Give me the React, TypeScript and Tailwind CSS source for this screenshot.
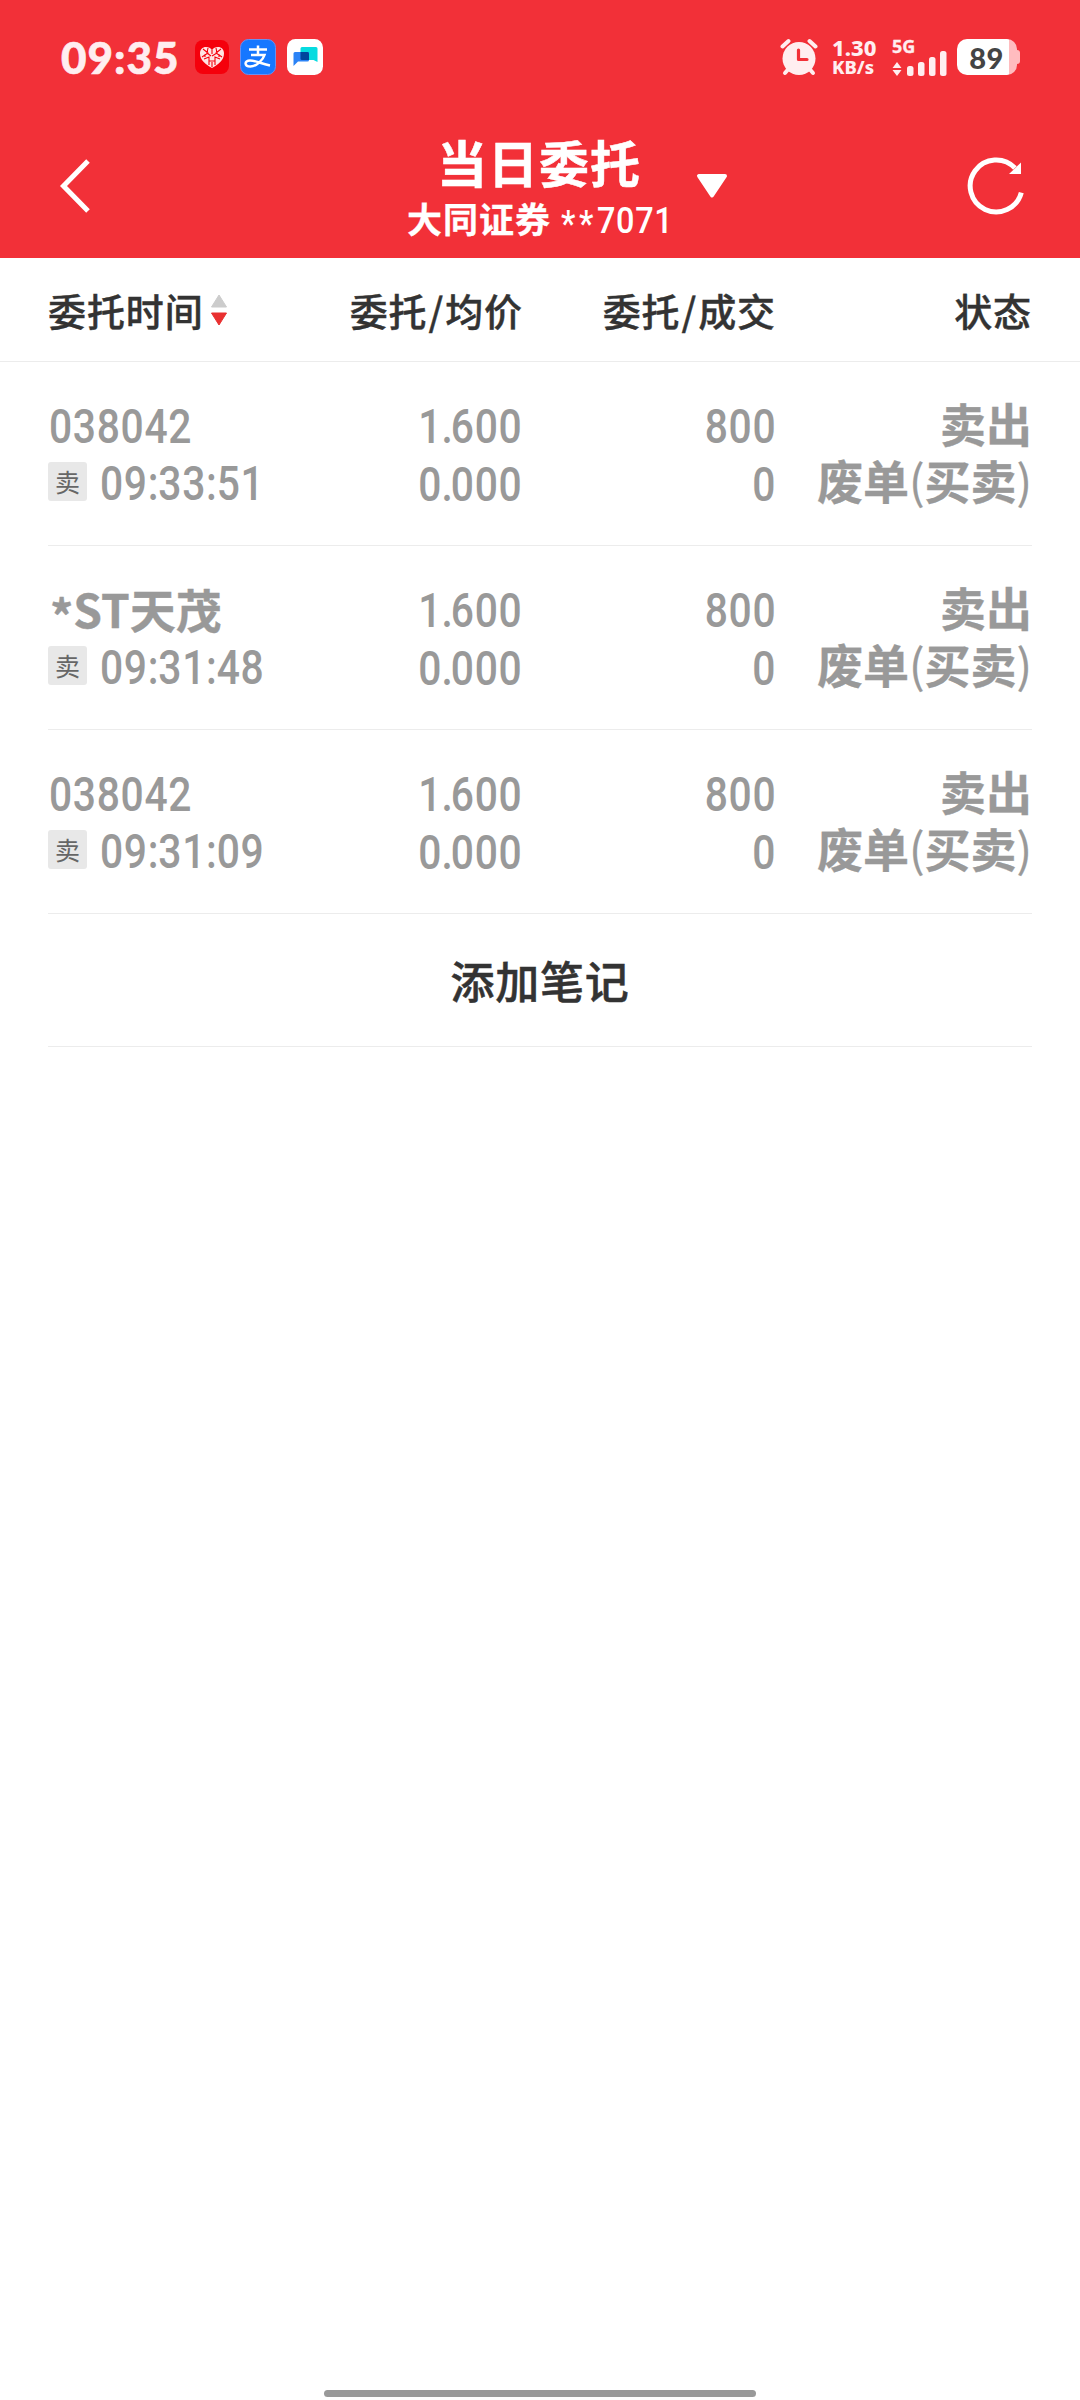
import clsx from "clsx";

type Order = {
  name: string;
  time: string;
  price: string;
  avg: string;
  amount: string;
  filled: string;
};

const orders: Order[] = [
  { name: "038042", time: "09:33:51", price: "1.600", avg: "0.000", amount: "800", filled: "0" },
  { name: "*ST天茂", time: "09:31:48", price: "1.600", avg: "0.000", amount: "800", filled: "0" },
  { name: "038042", time: "09:31:09", price: "1.600", avg: "0.000", amount: "800", filled: "0" },
];

const COLS = "grid grid-cols-[230px_245px_253px_256px]";

/** Condensed digits, with tighter dots and colons. */
function Num({ children, right = false }: { children: string; right?: boolean }) {
  return (
    <span
      className={clsx(
        "inline-block scale-x-[0.85] whitespace-nowrap font-['Roboto'] text-[48px] font-medium tracking-[0.8px]",
        right ? "origin-right" : "origin-left",
      )}
    >
      {children.split(/([.:])/).map((part, i) =>
        part === "." || part === ":" ? (
          <span key={i} className={part === "." ? "-ml-[1px] -mr-[3px]" : "-mr-[1px]"}>
            {part}
          </span>
        ) : (
          part
        ),
      )}
    </span>
  );
}

function StatusBar() {
  return (
    <div className="flex h-[114px] items-center pl-[61px] pr-[60px] text-[#ffeef0]">
      <span className="w-[134px] whitespace-nowrap font-['Lato'] text-[44px] font-black leading-none tracking-[1px] [-webkit-text-stroke:0.6px]">
        09:35
      </span>

      <svg width="34" height="34" viewBox="0 0 34 34">
        <rect width="34" height="34" rx="8" fill="#f5000c" />
        <path
          d="M17 28C11 24.500 5 20.500 5 13.500 5 9.500 7.500 7 11 7c2.500 0 4.800 1.200 6 3.200C18.200 8.200 20.500 7 23 7c3.500 0 6 2.500 6 6.500C29 20.500 23 24.500 17 28Z"
          fill="#ffe4e4"
        />
        <path
          d="M8 9l5 4-6 4M13 8l-1 5 4 3M21 8l1 5-5 3M26 9l-5 4 6 4M9 19l5-2 0 8M25 19l-5-2 0 8M14 21h6M17 10v4M17 22v5M10 14v3M24 14v3"
          stroke="#f5000c"
          strokeWidth="1.1"
          fill="none"
        />
      </svg>

      <svg className="ml-[11px]" width="36" height="36" viewBox="0 0 36 36">
        <rect x="0.500" y="0.500" width="35" height="35" rx="8" fill="#1677ff" stroke="#6c8ff0" />
        <path
          d="M9 10.500h18M18 6.500v9.500M11 16h13.500C23 21 16.500 27.500 10.500 27.500c-6.500 0-6.500-6-.5-6 6 0 10 3 20 5"
          stroke="#fff"
          strokeWidth="2.500"
          fill="none"
        />
      </svg>

      <svg className="ml-[11px]" width="36" height="36" viewBox="0 0 36 36">
        <rect width="36" height="36" rx="8.500" fill="#fff" />
        <path d="M15 8h14a1.500 1.500 0 0 1 1.500 1.500V23l-4-2H15a1.500 1.500 0 0 1-1.500-1.500v-10A1.500 1.500 0 0 1 15 8Z" fill="#06dbe0" />
        <path d="M8 13h14v8a1.500 1.500 0 0 1-1.500 1.500H11L6.500 27V14.500A1.500 1.500 0 0 1 8 13Z" fill="#2b83f6" />
        <path d="M13.500 13h7a1.500 1.500 0 0 1 1.500 1.500V21h-7a1.500 1.500 0 0 1-1.500-1.500Z" fill="#00459c" />
      </svg>

      <svg className="ml-auto" width="38" height="38" viewBox="0 0 38 38" stroke="#ffeef0" fill="none">
        <circle cx="19" cy="20.500" r="16.500" fill="#ffeef0" stroke="none" />
        <path d="M2.500 8.500 8.500 3M35.500 8.500 29.500 3" strokeWidth="4" strokeLinecap="round" />
        <path d="M8 31.500 5 35M30 31.500 33 35" strokeWidth="4" strokeLinecap="round" />
        <path d="M18.500 12v9.500H27" stroke="#f23038" strokeWidth="3.200" strokeLinecap="round" strokeLinejoin="round" />
      </svg>

      <div className="ml-[14px] flex w-[46px] flex-col whitespace-nowrap pb-[1px] font-['Noto_Sans'] font-extrabold">
        <span className="text-[22px] leading-[20px]">1.30</span>
        <span className="text-[18.500px] leading-[19px]">KB/s</span>
      </div>

      <div className="ml-[14px] flex flex-col">
        <span className="relative top-[2px] font-['Noto_Sans'] text-[18px] font-bold leading-[12px] [-webkit-text-stroke:0.3px]">
          5G
        </span>
        <svg width="55" height="26" viewBox="0 0 55 26" fill="#ffeef0">
          <path d="M5 12l4.500 6h-9ZM5 26l4.500-6h-9Z" />
          <rect x="15" y="16" width="6.500" height="10" rx="2.500" />
          <rect x="26" y="12" width="6.500" height="14" rx="2.500" />
          <rect x="37" y="7" width="6.500" height="19" rx="2.500" />
          <rect x="48" y="1" width="6.500" height="25" rx="2.500" />
        </svg>
      </div>

      <div className="ml-[10px] flex items-center">
        <div className="flex h-[36px] w-[60px] items-center justify-center overflow-hidden rounded-[10px] bg-linear-to-r from-white from-[52px] to-[#ffbcbf] to-[52px]">
          <span className="pr-[1px] font-['Lato'] text-[29px] font-black leading-none tracking-[0.5px] text-[#444]">89</span>
        </div>
        <div className="h-[14px] w-[3px] rounded-r-[3px] bg-[#ffbcbf]" />
      </div>
    </div>
  );
}

function NavBar() {
  return (
    <div className="flex h-[144px] pl-[58px] pr-[52px] text-white">
      <svg className="self-center" width="34" height="60" viewBox="0 0 34 60">
        <path d="M30 5 5.500 30 30 55" stroke="currentColor" strokeWidth="5" fill="none" />
      </svg>

      <div className="ml-[315px] w-[264px] pt-[17px] text-center font-['Noto_Sans_CJK_SC',sans-serif] font-bold">
        <h1 className="text-[50px] leading-[60px] tracking-[1px] [-webkit-text-stroke:0.5px]">当日委托</h1>
        <p className="mt-[2px] flex items-baseline whitespace-nowrap text-[35px] leading-[50px]">
          <span className="tracking-[1px] [-webkit-text-stroke:0.3px]">大同证券</span>
          <span className="ml-[10px] inline-block w-[108px] origin-left scale-x-[0.9] whitespace-nowrap text-left font-['Roboto'] text-[36px] font-medium tracking-[0.8px]">
            <span className="relative top-[3px] tracking-[4px]">**</span>7071
          </span>
        </p>
      </div>

      <svg className="ml-[24px] self-center" width="34" height="28" viewBox="0 0 34 28">
        <path d="M4 4h26L17 23.500Z" fill="currentColor" stroke="currentColor" strokeWidth="4" strokeLinejoin="round" />
      </svg>

      <svg className="ml-auto self-center" width="64" height="64" viewBox="0 0 64 64">
        <path d="M57.300 38.700A26 26 0 1 1 51 14" stroke="currentColor" strokeWidth="5" fill="none" />
        <path d="M57 8.500V20H45Z" fill="currentColor" />
      </svg>
    </div>
  );
}

function TableHead() {
  return (
    <div
      className={clsx(
        COLS,
        "h-[104px] items-center border-b border-[#ececec] px-12 font-['Noto_Sans_CJK_SC',sans-serif] text-[38px] font-medium leading-[56px] tracking-[0.9px] text-[#333] [-webkit-text-stroke:0.4px]",
      )}
    >
      <div className="flex items-center whitespace-nowrap">
        委托时间
        <svg className="ml-[6px]" width="18" height="32" viewBox="0 0 18 32">
          <path d="M9 1 16.500 13h-15Z" fill="#ccc" stroke="#ccc" strokeLinejoin="round" />
          <path d="M9 31 16.500 19h-15Z" fill="#e93030" stroke="#e93030" strokeLinejoin="round" />
        </svg>
      </div>
      <div className="text-right">
        委托<span className="mx-[1px]">/</span>均价
      </div>
      <div className="text-right">
        委托<span className="mx-[1px]">/</span>成交
      </div>
      <div className="text-right">状态</div>
    </div>
  );
}

function OrderRow({ order }: { order: Order }) {
  const isCode = /^\d+$/.test(order.name);

  return (
    <div className={clsx(COLS, "mx-12 h-[184px] border-b border-[#ececec] leading-[57px] text-[#999]")}>
      <div className="pt-[36px]">
        <div className="flex h-[57px] pl-[1px]">
          {isCode ? (
            <Num>{order.name}</Num>
          ) : (
            <span className="block whitespace-nowrap pl-[1px] font-['Noto_Sans_CJK_SC',sans-serif] text-[46px] font-bold leading-[53px] [-webkit-text-stroke:0.4px]">
              <span className="relative top-[6px]">*</span>
              {order.name.slice(1)}
            </span>
          )}
        </div>
        <div className="flex h-[57px]">
          <span className="mt-[7px] flex size-[39px] shrink-0 items-center justify-center rounded-[3px] bg-[#e8e8e8] font-['Noto_Sans_CJK_SC',sans-serif] text-[25px] leading-none text-[#666]">
            卖
          </span>
          <span className="ml-[13px] flex">
            <Num>{order.time}</Num>
          </span>
        </div>
      </div>
      <div className="flex flex-col items-end gap-[1px] pr-[1px] pt-[36px]">
        <Num right>{order.price}</Num>
        <Num right>{order.avg}</Num>
      </div>
      <div className="flex flex-col items-end gap-[1px] pt-[36px]">
        <Num right>{order.amount}</Num>
        <Num right>{order.filled}</Num>
      </div>
      <div className="flex flex-col items-end whitespace-nowrap pt-[32px] font-['Noto_Sans_CJK_SC',sans-serif] text-[46px] font-bold leading-[57px] [-webkit-text-stroke:0.3px]">
        <span>卖出</span>
        <span>
          废单<span className="font-normal">(</span>买卖<span className="font-normal">)</span>
        </span>
      </div>
    </div>
  );
}

export default function App() {
  return (
    <div className="flex h-[2400px] w-[1080px] flex-col overflow-hidden bg-white">
      <header className="bg-[#f23038]">
        <StatusBar />
        <NavBar />
      </header>

      <TableHead />
      {orders.map((order) => (
        <OrderRow key={order.time} order={order} />
      ))}

      <button
        type="button"
        className="mx-12 h-[133px] border-b border-[#ececec] font-['Noto_Sans_CJK_SC',sans-serif] text-[44px] font-medium tracking-[0.800px] text-[#333] [-webkit-text-stroke:0.5px]"
      >
        添加笔记
      </button>

      <div className="mx-auto mb-[3px] mt-auto h-[7px] w-[432px] rounded-full bg-[#999]" />
    </div>
  );
}
